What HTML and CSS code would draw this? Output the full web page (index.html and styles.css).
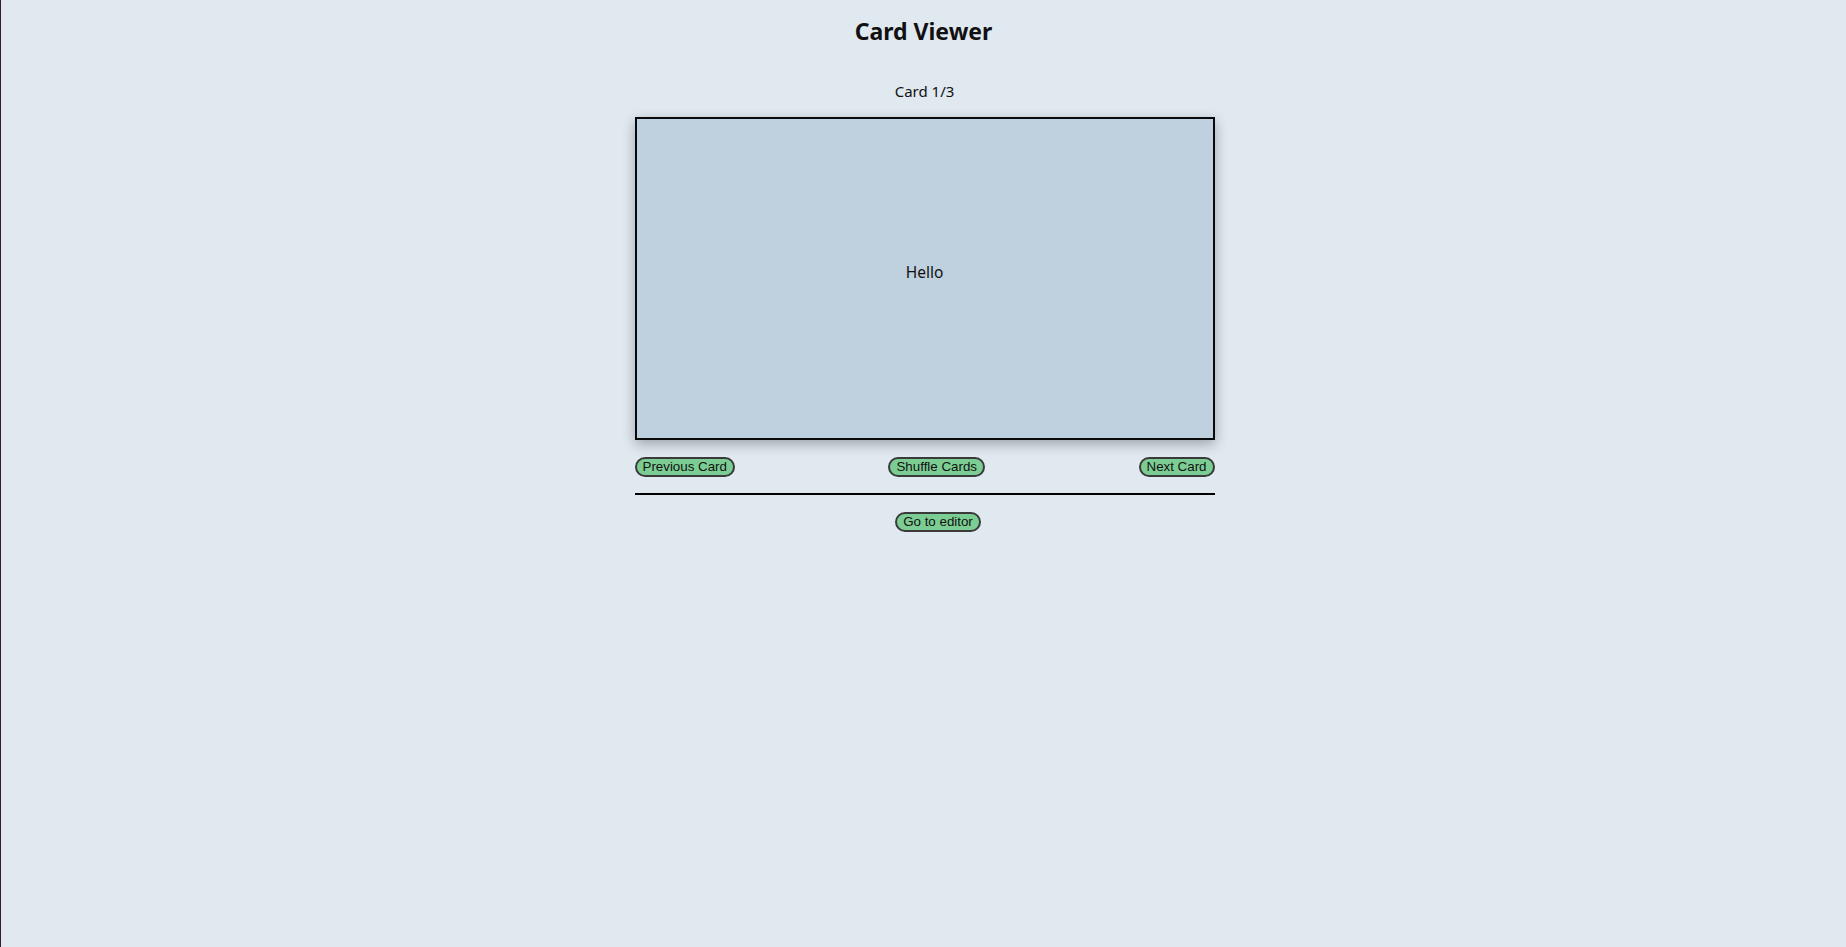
FILE: index.html
```html
<!DOCTYPE html>
<html>
<head>
<meta charset="utf-8">
<link rel="stylesheet" href="styles.css">
</head>
<body>
<div class="page">
  <h1 class="title">Card Viewer</h1>
  <div class="viewer">
    <p class="counter">Card 1/3</p>
    <div class="card"><span class="card-text">Hello</span></div>
    <div class="nav">
      <button class="btn">Previous Card</button>
      <button class="btn">Shuffle Cards</button>
      <button class="btn">Next Card</button>
    </div>
    <hr class="divider">
    <div class="footer">
      <button class="btn">Go to editor</button>
    </div>
  </div>
</div>
</body>
</html>
```
FILE: styles.css
```css
html, body {
  margin: 0;
  padding: 0;
  height: 100%;
}
body {
  background: #e0e8f0;
  border-left: 1px solid #3a1a30;
  box-sizing: border-box;
  font-family: "Noto Sans", "DejaVu Sans", sans-serif;
  color: #111;
}
.page {
  display: flex;
  flex-direction: column;
  align-items: center;
}
.title {
  margin: 17px 0 0;
  font-size: 23px;
  line-height: 28px;
  font-weight: 700;
}
.viewer {
  width: 580px;
  display: flex;
  flex-direction: column;
  margin-left: 2px;
}
.counter {
  margin: 36px 0 0;
  font-size: 15px;
  line-height: 20px;
  text-align: center;
}
.card {
  margin-top: 16px;
  height: 323px;
  box-sizing: border-box;
  border: 2px solid #0a0a0a;
  background: #bfd0de;
  box-shadow: 0 4px 12px rgba(0, 0, 0, 0.3);
  display: flex;
  align-items: center;
  justify-content: center;
  padding-bottom: 13px;
  font-size: 15.5px;
}
.nav {
  margin-top: 17px;
  display: flex;
  justify-content: space-between;
}
.btn {
  font-family: "Liberation Sans", Arial, sans-serif;
  font-size: 13.333px;
  height: 20px;
  padding: 0 6px;
  border: 2px solid #3a3a3a;
  border-radius: 10px;
  background: #7ccd93;
  color: #111;
  line-height: 16px;
}
.divider {
  margin: 16px 0 0;
  border: none;
  height: 2px;
  background: #000;
}
.footer {
  margin-top: 17px;
  display: flex;
  justify-content: center;
  padding-left: 27px;
}
```
